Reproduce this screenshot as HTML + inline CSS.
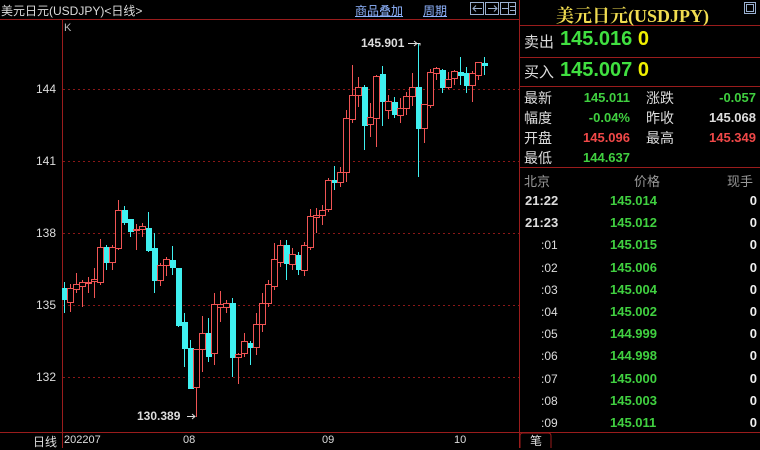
<!DOCTYPE html>
<html><head><meta charset="utf-8"><style>
html,body{margin:0;padding:0;background:#000;width:760px;height:448px;overflow:hidden;font-family:"Liberation Sans","Noto Sans CJK SC",sans-serif;}
.a{position:absolute;white-space:nowrap;}
</style></head><body>
<svg id="s" width="760" height="448" style="position:absolute;left:0;top:0" xmlns="http://www.w3.org/2000/svg">
<g stroke="#9a1c1c" stroke-width="1" fill="none">
<line x1="0" y1="19.5" x2="519" y2="19.5"/>
<line x1="62.5" y1="20" x2="62.5" y2="448"/>
<line x1="0" y1="432.5" x2="760" y2="432.5"/>
<line x1="519.5" y1="0" x2="519.5" y2="448"/>
<line x1="520" y1="25.5" x2="760" y2="25.5"/>
<line x1="520" y1="57.5" x2="760" y2="57.5"/>
<line x1="520" y1="86.5" x2="760" y2="86.5"/>
<line x1="520" y1="167.5" x2="760" y2="167.5"/>
</g>
<g stroke="#8a1818" stroke-dasharray="2,3">
<line x1="63" y1="89.5" x2="519" y2="89.5"/>
<line x1="63" y1="161.5" x2="519" y2="161.5"/>
<line x1="63" y1="233.5" x2="519" y2="233.5"/>
<line x1="63" y1="305.5" x2="519" y2="305.5"/>
<line x1="63" y1="377.5" x2="519" y2="377.5"/>
</g>
<path d="M520 448 L520 436 Q520 433 523 433 L548 433 Q551 433 551 436 L551 448" stroke="#9a1c1c" fill="#000"/>
<rect x="744.5" y="2.5" width="11" height="11" stroke="#9ab0d0" fill="none"/>
<rect x="746.5" y="4.5" width="7" height="7" stroke="#9ab0d0" fill="none"/>
<g stroke="#9ab0d0" fill="none">
<rect x="470.5" y="2.5" width="13" height="12"/><rect x="485.5" y="2.5" width="13" height="12"/><rect x="500.5" y="2.5" width="15" height="12"/>
<path d="M473 8.5h9M476 5.5l-3 3 3 3M497 8.5h-9M494 5.5l3 3-3 3M508.5 3v11M502 8.5h6M510 6.5h5M510 10.5h5"/>
</g>
<g id="c"></g>
<path d="M415 43.5h5v2" stroke="#ddd" fill="none"/>
<path d="M187 416.5h8M192 414l3 2.5-3 2.5" stroke="#ddd" fill="none"/>
<path d="M408 43.5h9M414 41l3 2.5-3 2.5" stroke="#ddd" fill="none"/>
</svg>
<div class="a" style="left:1px;top:2px;font-size:12px;color:#ddd">美元日元(USDJPY)&lt;日线&gt;</div>
<div class="a" style="left:355px;top:2px;font-size:12px;color:#8fb4ff;text-decoration:underline">商品叠加</div>
<div class="a" style="left:423px;top:2px;font-size:12px;color:#8fb4ff;text-decoration:underline">周期</div>
<div class="a" style="left:64px;top:22px;font-size:11px;color:#bbb">K</div>
<div class="a" style="left:361px;top:36px;font-size:12px;color:#ddd;font-weight:bold">145.901</div>
<div class="a" style="left:137px;top:409px;font-size:12px;color:#ddd;font-weight:bold">130.389</div>
<div class="a" style="left:36px;top:82px;font-size:12px;color:#ddd">144</div>
<div class="a" style="left:36px;top:154px;font-size:12px;color:#ddd">141</div>
<div class="a" style="left:36px;top:226px;font-size:12px;color:#ddd">138</div>
<div class="a" style="left:36px;top:298px;font-size:12px;color:#ddd">135</div>
<div class="a" style="left:36px;top:370px;font-size:12px;color:#ddd">132</div>
<div class="a" style="left:33px;top:433px;font-size:12px;color:#ddd">日线</div>
<div class="a" style="left:64px;top:434px;font-size:11px;color:#ddd">202207</div>
<div class="a" style="left:183px;top:434px;font-size:11px;color:#ddd">08</div>
<div class="a" style="left:322px;top:434px;font-size:11px;color:#ddd">09</div>
<div class="a" style="left:454px;top:434px;font-size:11px;color:#ddd">10</div>
<div class="a" style="left:530px;top:432px;font-size:12px;color:#ddd">笔</div>
<div class="a" style="left:556px;top:2px;font-size:18px;color:#f0dc50;font-weight:bold;font-family:'Liberation Serif','Noto Serif CJK SC',serif">美元日元(USDJPY)</div>
<div class="a" style="left:524px;top:31px;font-size:15px;color:#ddd">卖出</div>
<div class="a" style="left:560px;top:28px;font-size:20px;color:#40e040;font-weight:bold">145.016 <span style="color:#f0f000">0</span></div>
<div class="a" style="left:524px;top:61px;font-size:15px;color:#ddd">买入</div>
<div class="a" style="left:560px;top:59px;font-size:20px;color:#40e040;font-weight:bold">145.007 <span style="color:#f0f000">0</span></div>
<div style="position:absolute;left:524px;top:88px;width:232px;font-size:14px;line-height:20px;color:#ddd">
<div style="position:relative;height:20px"><span>最新</span><span class="a" style="right:126px;color:#40d040;font-weight:bold;font-size:13px">145.011</span><span class="a" style="left:122px">涨跌</span><span class="a" style="right:0;color:#40d040;font-weight:bold;font-size:13px">-0.057</span></div>
<div style="position:relative;height:20px"><span>幅度</span><span class="a" style="right:126px;color:#40d040;font-weight:bold;font-size:13px">-0.04%</span><span class="a" style="left:122px">昨收</span><span class="a" style="right:0;color:#ddd;font-weight:bold;font-size:13px">145.068</span></div>
<div style="position:relative;height:20px"><span>开盘</span><span class="a" style="right:126px;color:#f04848;font-weight:bold;font-size:13px">145.096</span><span class="a" style="left:122px">最高</span><span class="a" style="right:0;color:#f04848;font-weight:bold;font-size:13px">145.349</span></div>
<div style="position:relative;height:20px"><span>最低</span><span class="a" style="right:126px;color:#40d040;font-weight:bold;font-size:13px">144.637</span></div>
</div>
<div class="a" style="left:524px;top:171px;font-size:13px;color:#999">北京</div>
<div class="a" style="left:634px;top:171px;font-size:13px;color:#999">价格</div>
<div class="a" style="left:727px;top:171px;font-size:13px;color:#999">现手</div>
<div id="t" style="position:absolute;left:520px;top:190px;width:237px"></div>
<script>
var c=[[64,'c',288,299,282,313],[70,'r',288,302,284,312],[76,'r',284,289,273,293],[82,'r',282,286,280,307],[88,'r',282,283,277,293],[94,'r',279,281,268,298],[100,'r',247,282,239,285],[106,'c',247,262,245,270],[112,'r',247,262,245,270],[118,'r',210,248,200,250],[124,'c',210,222,206,225],[130,'c',219,231,219,237],[136,'r',229,230,224,250],[142,'r',226,229,223,237],[148,'c',228,250,212,252],[154,'c',248,280,233,293],[160,'r',265,280,263,286],[166,'r',259,265,257,276],[172,'c',260,267,246,275],[178,'c',268,325,268,327],[184,'c',322,348,313,367],[190,'c',348,388,340,388],[196,'r',349,387,349,417],[202,'r',333,349,316,372],[208,'c',333,356,318,362],[214,'r',304,353,293,365],[220,'r',304,307,291,322],[226,'r',303,307,300,313],[232,'c',303,357,298,377],[238,'r',354,357,353,384],[244,'r',341,353,333,357],[250,'c',343,347,341,365],[256,'r',324,347,313,355],[262,'r',303,324,293,332],[268,'r',284,303,280,307],[274,'r',259,286,243,290],[280,'r',245,262,240,267],[286,'c',245,263,240,280],[292,'r',254,264,248,270],[298,'c',255,269,252,275],[304,'r',245,270,242,276],[310,'r',216,247,209,250],[316,'r',215,217,208,233],[322,'r',210,215,205,225],[328,'r',180,209,178,212],[334,'c',180,182,166,190],[340,'r',172,182,167,187],[346,'r',118,172,110,182],[352,'r',95,119,65,123],[358,'r',87,95,77,107],[364,'c',87,125,85,150],[370,'r',117,124,103,137],[376,'r',76,118,75,147],[382,'c',74,101,66,126],[388,'r',101,110,95,119],[394,'c',102,114,97,118],[400,'r',108,115,98,123],[406,'r',96,108,92,115],[412,'r',87,96,73,106],[418,'c',87,128,43,177],[424,'r',104,128,104,143],[430,'r',72,105,69,108],[436,'r',68,73,67,80],[442,'c',70,87,69,93],[448,'r',79,87,72,89],[454,'r',71,78,70,85],[460,'c',72,75,57,85],[466,'c',73,85,67,93],[472,'r',73,85,71,102],[478,'r',62,75,62,80],[484,'c',63,65,57,75]];
var h='';c.forEach(function(d){var x=d[0],col=d[1]=='r'?'#f05454':'#3ff0f0';
h+='<line x1="'+(x+.5)+'" y1="'+d[4]+'" x2="'+(x+.5)+'" y2="'+d[5]+'" stroke="'+col+'"/>';
var hh=Math.max(d[3]-d[2],1);
if(d[1]=='r')h+='<rect x="'+(x-2.5)+'" y="'+(d[2]+.5)+'" width="6" height="'+hh+'" fill="#000" stroke="'+col+'"/>';
else h+='<rect x="'+(x-2)+'" y="'+d[2]+'" width="6" height="'+(hh+1)+'" fill="'+col+'"/>';});
document.getElementById('c').innerHTML=h;
var r=[['21:22','145.014',1],['21:23','145.012',1],[':01','145.015'],[':02','145.006'],[':03','145.004'],[':04','145.002'],[':05','144.999'],[':06','144.998'],[':07','145.000'],[':08','145.003'],[':09','145.011']];
var t='';r.forEach(function(d){t+='<div style="position:relative;height:22.2px;font-size:13px;line-height:22px;font-weight:bold"><span class="a" style="left:'+(d[2]?5:21)+'px;color:#ddd;'+(d[2]?'':'font-weight:normal;font-size:12px')+'">'+d[0]+'</span><span class="a" style="left:90px;color:#40d040">'+d[1]+'</span><span class="a" style="right:0;color:#eee">0</span></div>';});
document.getElementById('t').innerHTML=t;
</script>
</body></html>
